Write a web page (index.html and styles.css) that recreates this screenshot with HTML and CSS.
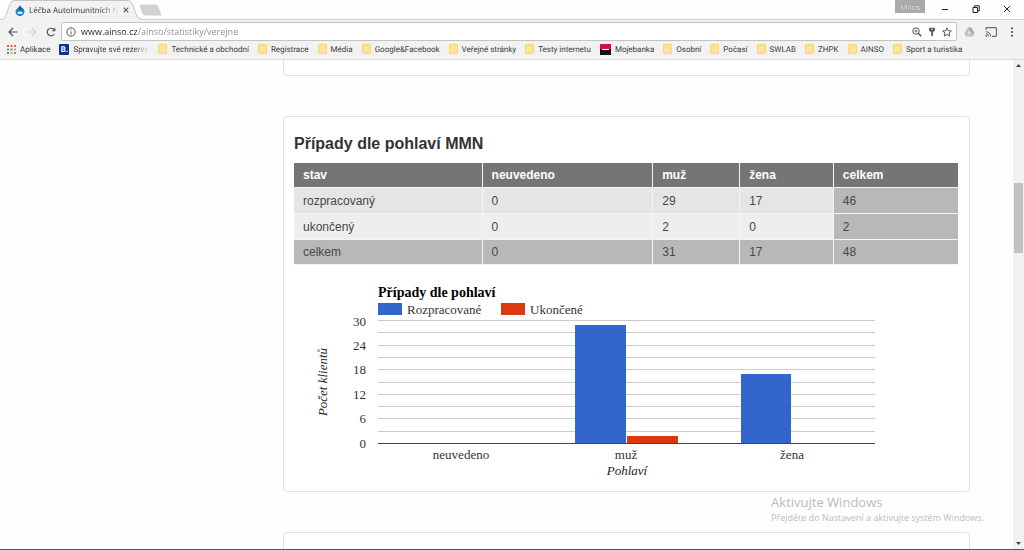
FILE: index.html
```html
<!DOCTYPE html>
<html lang="cs">
<head>
<meta charset="utf-8">
<meta name="viewport" content="width=device-width, initial-scale=1">
<title>Léčba Autoimunitních Nemocí</title>
<link rel="stylesheet" href="styles.css">
</head>
<body>
<header class="browser">
  <div class="titlebar">
    <div class="tab">
      <svg class="tab-shape" viewBox="0 0 142 20" aria-hidden="true"><path d="M0 19.500C4 19.500 5 18 6.500 14L10 4Q11.500 .5 14 .5H128Q131 .5 132.500 4L136 14Q138 19.500 142 19.500V20H0Z" fill="#f2f2f2"/><path d="M0 19.500C4 19.500 5 18 6.500 14L10 4Q11.500 .5 14 .5H128Q131 .5 132.500 4L136 14Q138 19.500 142 19.500" fill="none" stroke="#c4c4c4"/></svg>
      <svg class="drop" viewBox="0 0 10 11" aria-hidden="true"><path d="M4.700 0C5 2 9.500 3 9.500 6.700A4.500 4.200 0 0 1 .5 6.700C.5 4 4 3 4.700 0Z" fill="#1683c6"/><path d="M5 1.500Q6 3 8 4Q6 5 3 4Z" fill="#0a5a97"/><path d="M2.500 8Q2.500 6.300 4.200 6.500T7.500 7Q8.500 8.300 7 9Q6 8 4 9Q2.500 9 2.500 8Z" fill="#e8f5ff"/></svg>
      <span class="tab-title">Léčba AutoImunitních N</span>
      <button class="plain tab-close" aria-label="Zavřít kartu"><svg width="6" height="6" viewBox="0 0 6 6"><path d="M.7.700 5.300 5.300M5.300.700.7 5.300" stroke="#555" stroke-width="1.100"/></svg></button>
    </div>
    <button class="plain new-tab" aria-label="Nová karta"><svg width="23" height="12" viewBox="0 0 23 12"><path d="M1.500.500H17Q18.500.500 19.500 3L22.500 11.500H6Q4 11.500 3 8.500L.5 2Q.3.500 1.500.500Z" fill="#d2d2d2"/></svg></button>
    <div class="window-controls">
      <button class="profile">Milos</button>
      <button class="plain win" aria-label="Minimalizovat"><svg width="8" height="8" viewBox="0 0 8 8"><path d="M1 4.500H7" stroke="#222"/></svg></button>
      <button class="plain win" aria-label="Obnovit"><svg width="8" height="8" viewBox="0 0 8 8" fill="none" stroke="#222"><path d="M1 2.500H5.500V7.500H1ZM2.500 2V.800H7.200V6H6"/></svg></button>
      <button class="plain win" aria-label="Zavřít"><svg width="8" height="8" viewBox="0 0 8 8"><path d="M1 1 7 7M7 1 1 7" stroke="#222"/></svg></button>
    </div>
  </div>
  <div class="toolbar">
    <button class="plain nav" aria-label="Zpět"><svg width="10" height="10" viewBox="0 0 10 10" fill="none" stroke="#555" stroke-width="1.200"><path d="M9.500 5H1M5 1 1 5 5 9"/></svg></button>
    <button class="plain nav" aria-label="Vpřed" disabled><svg width="10" height="10" viewBox="0 0 10 10" fill="none" stroke="#d5d5d5" stroke-width="1.200"><path d="M.5 5H9M5 1 9 5 5 9"/></svg></button>
    <button class="plain nav" aria-label="Obnovit stránku"><svg width="10" height="10" viewBox="0 0 10 10"><path d="M8.300 7A3.800 3.800 0 1 1 7.800 2.400L9 3.700" fill="none" stroke="#555" stroke-width="1.200"/><path d="M9.400.600V4.200H5.800Z" fill="#555"/></svg></button>
    <div class="omnibox">
      <svg width="10" height="10" viewBox="0 0 10 10" fill="none" stroke="#555"><circle cx="5" cy="5" r="4.200"/><path d="M5 4.500V7.500M5 2.500V3.500"/></svg>
      <input class="url" type="text" aria-label="Adresa" value="www.ainso.cz/ainso/statistiky/verejne">
      <button class="plain tool" aria-label="Lupa"><svg width="10" height="10" viewBox="0 0 10 10" fill="none" stroke="#555"><circle cx="4" cy="4" r="3.200"/><path d="M6.300 6.300 9.300 9.300" stroke-width="1.500"/><path d="M2.500 4H5.500M4 2.500V5.500" stroke-width=".8"/></svg></button>
      <button class="plain tool" aria-label="Hesla"><svg width="10" height="10" viewBox="0 0 10 10"><path d="M3 .8H7Q8 .8 8 2V3Q8 4.500 6 4.800V8.500L5 9.500 4.200 8.500V4.800Q2 4.500 2 3V2Q2 .8 3 .8Z" fill="#555"/><path d="M4 2.200H6" stroke="#fff" stroke-width=".8"/></svg></button>
      <button class="plain tool" aria-label="Přidat záložku"><svg width="10" height="10" viewBox="0 0 10 10"><path d="M5 .8 6.200 3.700 9.400 4 7 6 7.700 9.100 5 7.500 2.300 9.100 3 6 .6 4 3.800 3.700Z" fill="none" stroke="#555"/></svg></button>
    </div>
    <button class="plain ext" aria-label="Disk"><svg width="11" height="10" viewBox="0 0 11 10"><path d="M3.700.500H7.200L10.700 6.500 9 9.500H2L.3 6.500Z" fill="#c3c3c3"/><path d="M5.500 3.500 7.300 6.500H3.700Z" fill="#eee"/><path d="M7.200.500 10.700 6.500H7.300L4 .8Z" fill="#aaa"/></svg></button>
    <button class="plain ext" aria-label="Odeslat"><svg width="12" height="10" viewBox="0 0 12 10" fill="none" stroke="#555"><path d="M1 3V.700H11.300V9.300H7M1 4.700A4.600 4.600 0 0 1 5.600 9.300M1 6.800A2.500 2.500 0 0 1 3.500 9.300"/><circle cx="1.200" cy="9" r=".5"/></svg></button>
    <button class="plain ext" aria-label="Nabídka"><svg width="10" height="10" viewBox="0 0 10 10" fill="#444"><circle cx="5" cy="1.300" r="1"/><circle cx="5" cy="5" r="1"/><circle cx="5" cy="8.700" r="1"/></svg></button>
  </div>
  <nav class="bookmarks" aria-label="Záložky">
    <a href="#"><svg width="9" height="9" viewBox="0 0 9 9"><path d="M0 0H2V2H0ZM3.500 0H5.500V2H3.500ZM7 0H9V2H7Z" fill="#e8604c"/><path d="M0 3.500H2V5.500H0ZM7 7H9V9H7Z" fill="#4caf62"/><path d="M3.500 3.500H5.500V5.500H3.500Z" fill="#4a86e8"/><path d="M7 3.500H9V5.500H7ZM3.500 7H5.500V9H3.500Z" fill="#e8a83c"/><path d="M0 7H2V9H0Z" fill="#48a85a"/></svg>Aplikace</a>
    <a href="#"><span class="booking">B.</span><span class="fade">Spravujte své rezerva</span></a>
    <a href="#"><i class="folder"></i>Technické a obchodní</a>
    <a href="#"><i class="folder"></i>Registrace</a>
    <a href="#"><i class="folder"></i>Média</a>
    <a href="#"><i class="folder"></i>Google&amp;Facebook</a>
    <a href="#"><i class="folder"></i>Veřejné stránky</a>
    <a href="#"><i class="folder"></i>Testy internetu</a>
    <a href="#"><i class="bank"></i>Mojebanka</a>
    <a href="#"><i class="folder"></i>Osobní</a>
    <a href="#"><i class="folder"></i>Počasí</a>
    <a href="#"><i class="folder"></i>SWLAB</a>
    <a href="#"><i class="folder"></i>ZHPK</a>
    <a href="#"><i class="folder"></i>AINSO</a>
    <a href="#"><i class="folder"></i>Sport a turistika</a>
  </nav>
</header>
<div class="viewport">
  <main class="content">
    <section class="card card-previous"></section>
    <section class="card">
      <h2>Případy dle pohlaví MMN</h2>
      <table>
        <colgroup><col class="c-state"><col class="c-none"><col class="c-man"><col class="c-woman"><col class="c-sum"></colgroup>
        <thead><tr><th>stav</th><th>neuvedeno</th><th>muž</th><th>žena</th><th>celkem</th></tr></thead>
        <tbody>
          <tr><td>rozpracovaný</td><td>0</td><td>29</td><td>17</td><td class="sum">46</td></tr>
          <tr><td>ukončený</td><td>0</td><td>2</td><td>0</td><td class="sum">2</td></tr>
        </tbody>
        <tfoot><tr><td>celkem</td><td>0</td><td>31</td><td>17</td><td>48</td></tr></tfoot>
      </table>
      <svg class="chart" viewBox="0 0 664 206" role="img" aria-label="Případy dle pohlaví">
        <text class="chart-title" x="84" y="22">Případy dle pohlaví</text>
        <rect class="done-no" x="84" y="28" width="24" height="12"/>
        <text x="113" y="39">Rozpracované</text>
        <rect class="done-yes" x="207" y="28" width="24" height="12"/>
        <text x="236" y="39">Ukončené</text>
        <path class="grid" d="M84 45.500H581M84 57.500H581M84 70.500H581M84 82.500H581M84 94.500H581M84 107.500H581M84 119.500H581M84 131.500H581M84 143.500H581M84 156.500H581"/>
        <rect class="done-no" x="281" y="50" width="51" height="118"/>
        <rect class="done-yes" x="333" y="161" width="51" height="7"/>
        <rect class="done-no" x="447" y="99" width="50" height="69"/>
        <path class="axis" d="M84 168.500H581"/>
        <g class="scale"><text x="72" y="51">30</text><text x="72" y="75">24</text><text x="72" y="99">18</text><text x="72" y="124">12</text><text x="72" y="148">6</text><text x="72" y="173">0</text></g>
        <g class="labels"><text x="167" y="184">neuvedeno</text><text x="332" y="184">muž</text><text x="498" y="184">žena</text></g>
        <text class="axis-title" x="333" y="200">Pohlaví</text>
        <text class="axis-title" transform="translate(33 107) rotate(-90)">Počet klientů</text>
      </svg>
    </section>
    <section class="card card-next"></section>
  </main>
  <div class="scrollbar" aria-hidden="true">
    <svg width="11" height="11" viewBox="0 0 11 11"><path d="M3 7H8L5.500 4Z" fill="#444"/></svg>
    <div class="track"><div class="thumb"></div></div>
    <svg width="11" height="11" viewBox="0 0 11 11"><path d="M3 4H8L5.500 7Z" fill="#444"/></svg>
  </div>
</div>
<aside class="activation">
  <p class="activation-title">Aktivujte Windows</p>
  <p>Přejděte do Nastavení a aktivujte systém Windows.</p>
</aside>
</body>
</html>
```
FILE: styles.css
```css
* { box-sizing: border-box; }
body {
  margin: 0;
  height: 100vh;
  display: flex;
  flex-direction: column;
  overflow: hidden;
  background: #fefefe;
  border-bottom: 1px solid #555;
  font-family: "Liberation Sans", Arial, sans-serif;
  font-size: 12px;
  color: #484848;
}
svg { flex: none; display: block; }
.plain {
  border: 0;
  padding: 0;
  background: none;
  display: grid;
  place-items: center;
}

/* Browser frame */
.browser {
  flex: none;
  font-family: "Open Sans", "Noto Sans", sans-serif;
  font-size: 8px;
  text-rendering: geometricPrecision;
}
.titlebar {
  display: flex;
  height: 20px;
  border-bottom: 1px solid #d0d0d0;
  background: #fefefe;
}
.tab {
  position: relative;
  display: flex;
  align-items: center;
  width: 142px;
  height: 20px;
  padding: 0 10px 0 15px;
}
.tab-shape { position: absolute; inset: 0; width: 142px; height: 20px; }
.drop { position: relative; width: 10px; height: 11px; margin-right: 4px; }
.tab-title, .fade {
  white-space: nowrap;
  mask-image: linear-gradient(to right, #000 80%, transparent);
}
.tab-title { position: relative; width: 90px; color: #333; }
.tab-close { position: relative; width: 12px; height: 12px; margin-left: 1px; }
.new-tab { align-self: center; margin-left: -3px; }
.window-controls { display: flex; margin-left: auto; padding-right: 2px; }
.profile {
  width: 30px;
  height: 13px;
  margin-right: 4px;
  border: 0;
  padding: 0;
  background: #aaa;
  color: #fff;
  font: 8px/12px "Open Sans", sans-serif;
  text-shadow: 0 0 1px #444;
}
.win { width: 31px; height: 18px; }
.toolbar {
  display: flex;
  align-items: center;
  height: 21px;
  padding: 2px 2px 0 3px;
  background: #f2f2f2;
}
.nav { width: 19px; height: 18px; }
.omnibox {
  flex: 1;
  display: flex;
  align-items: center;
  height: 19px;
  margin: 0 2px 0 1px;
  padding: 0 2px 0 4px;
  border: 1px solid #c3c3c3;
  border-radius: 2px;
  background: #fff;
}
.url {
  flex: 1;
  min-width: 0;
  border: 0;
  padding: 0;
  margin-left: 5px;
  outline: 0;
  font: 9px/14px "Open Sans", sans-serif;
  color: transparent;
  background: linear-gradient(to right, #222 56px, #888 56px);
  background-clip: text;
}
.tool { width: 15px; height: 16px; }
.ext { width: 21px; height: 18px; }
.bookmarks {
  display: flex;
  align-items: center;
  gap: 9px;
  height: 19px;
  padding: 0 7px 2px;
  border-bottom: 1px solid #dcdcdc;
  background: #f2f2f2;
  font-family: Roboto, "Open Sans", sans-serif;
}
.bookmarks a {
  display: flex;
  align-items: center;
  gap: 4px;
  color: #3c3c3c;
  text-decoration: none;
  white-space: nowrap;
}
.fade { width: 76px; }
.booking {
  width: 10px;
  height: 11px;
  border-radius: 1px;
  background: #073590;
  color: #fff;
  font-weight: bold;
  line-height: 11px;
  text-align: center;
}
.folder {
  width: 9px;
  height: 10px;
  border: 1px solid #f4d77a;
  border-radius: 1px;
  background: #fce494;
}
.bank {
  width: 11px;
  height: 11px;
  background: linear-gradient(#fff, #fff) center / 7px 1px no-repeat, linear-gradient(#d5103f 50%, #111 50%);
}

/* Page */
.viewport { flex: 1; min-height: 0; display: flex; }
.content {
  flex: 1;
  display: flex;
  flex-direction: column;
  gap: 40px;
  min-width: 0;
  overflow: hidden;
  padding: 0 43px 0 283px;
}
.card {
  flex: none;
  border: 1px solid #e0e0e0;
  border-radius: 4px;
  padding: 16px 11px 10px 10px;
  background: #fff;
}
.card-previous { height: 16px; padding: 0; border-top: 0; border-radius: 0 0 4px 4px; }
.card-next { height: 80px; }
h2 { margin: 0 0 8px; font-size: 16px; line-height: 22px; color: #333; }
table {
  width: 100%;
  table-layout: fixed;
  border-collapse: separate;
  border-spacing: 0;
}
.c-state { width: 28.4%; }
.c-none { width: 25.7%; }
.c-man { width: 13.1%; }
.c-woman { width: 14.1%; }
th, td {
  height: 26px;
  padding: 0 9px;
  border-right: 1px solid #f4f4f4;
  border-bottom: 1px solid #f4f4f4;
  text-align: left;
}
th:last-child, td:last-child { border-right: 0; }
th { height: 25px; background: #757575; color: #fff; }
tbody td { background: #e5e5e5; }
tbody tr:nth-child(2) td { background: #eee; }
tfoot td, tbody td.sum, tbody tr:nth-child(2) td.sum { background: #b8b8b8; }
tfoot td { height: 25px; }

/* Chart */
.chart {
  width: 100%;
  margin-top: 10px;
  font-family: Georgia, "Liberation Serif", serif;
  font-size: 13px;
  fill: #333;
}
.chart-title { font-size: 14px; font-weight: bold; fill: #000; }
.done-no { fill: #3366cc; }
.done-yes { fill: #dc3912; }
.grid { stroke: #ccc; }
.axis { stroke: #444; }
.scale { text-anchor: end; }
.labels, .axis-title { text-anchor: middle; }
.axis-title { font-style: italic; fill: #222; }

.scrollbar {
  display: flex;
  flex-direction: column;
  width: 11px;
  background: #f1f1f1;
}
.track { flex: 1; padding: 0 1px; }
.track::before { content: ""; display: block; height: 24%; }
.thumb { height: 15%; background: #c1c1c1; }

/* System notice drawn over the page */
.activation {
  position: absolute;
  right: 40px;
  bottom: 25px;
  color: #bbb;
  font: 9px/14px "Open Sans", sans-serif;
}
.activation p { margin: 0; }
.activation .activation-title { font-size: 13px; line-height: 18px; }
```
